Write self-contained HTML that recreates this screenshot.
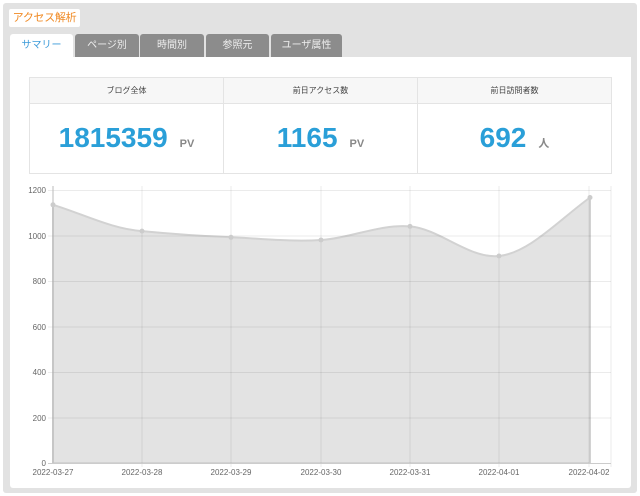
<!DOCTYPE html>
<html><head><meta charset="utf-8"><style>
body{margin:0;width:640px;height:496px;background:#fff;font-family:"Liberation Sans","Noto Sans CJK JP",sans-serif;position:relative;overflow:hidden}
.bg{position:absolute;left:3px;top:3px;width:634px;height:490px;background:#e2e2e2;border-radius:3px}
.title{position:absolute;left:9px;top:9px;width:71px;height:18px;background:#fff;border-radius:2px;color:#f08a24;font-size:11px;line-height:18px;text-align:center;white-space:nowrap;letter-spacing:-0.3px}
.tab{position:absolute;top:34px;height:23px;background:#8c8c8c;color:#eee;font-size:10px;line-height:24px;text-align:center;border-radius:3px 3px 0 0;white-space:nowrap}
.panel{position:absolute;left:10px;top:57px;width:621px;height:431px;background:#fff;border-radius:0 0 3px 3px}
.box{position:absolute;top:77px;width:193px;height:95px;border:1px solid #e4e4e4;background:#fff}
.box .h{height:25px;background:#f7f7f7;border-bottom:1px solid #e4e4e4;font-size:8px;color:#444;text-align:center;line-height:25px}
.box .v{text-align:center;margin-top:18px;color:#2a9fd8;font-size:28px;font-weight:bold}
.box .v span{font-size:11px;color:#888;margin-left:12px}
</style></head><body>
<div class="bg"></div>
<div class="title">アクセス解析</div>
<div class="tab" style="left:10px;width:63px;background:#fff;color:#3a9ad9">サマリー</div>
<div class="tab" style="left:75px;width:64px">ページ別</div>
<div class="tab" style="left:140px;width:64px">時間別</div>
<div class="tab" style="left:206px;width:63px">参照元</div>
<div class="tab" style="left:271px;width:71px">ユーザ属性</div>
<div class="panel"></div>
<div class="box" style="left:29px"><div class="h">ブログ全体</div><div class="v">1815359<span>PV</span></div></div>
<div class="box" style="left:223px"><div class="h">前日アクセス数</div><div class="v">1165<span>PV</span></div></div>
<div class="box" style="left:417px"><div class="h">前日訪問者数</div><div class="v">692<span>人</span></div></div>
<svg style="position:absolute;left:0;top:0" width="640" height="496" font-family="Liberation Sans, sans-serif" font-size="8" fill="#666">
<path d="M53,204.8 C83,214 112,229 142,231.1 C172,234 201,236 231,237.3 C261,238.5 291,242 321,240 C351,238 380,224 410,226.4 C440,229 469,259 499,256 C529,253 559,220 590,197.5 L590,463 L53,463Z" fill="#e3e3e3" stroke="#d2d2d2" stroke-width="2"/>
<g stroke="rgba(0,0,0,0.08)" stroke-width="1">
<line x1="48" y1="190.5" x2="611" y2="190.5"/><line x1="48" y1="236" x2="611" y2="236"/><line x1="48" y1="281.5" x2="611" y2="281.5"/><line x1="48" y1="327" x2="611" y2="327"/><line x1="48" y1="372.5" x2="611" y2="372.5"/><line x1="48" y1="418" x2="611" y2="418"/>
<line x1="142" y1="186" x2="142" y2="467"/><line x1="231" y1="186" x2="231" y2="467"/><line x1="321" y1="186" x2="321" y2="467"/><line x1="410" y1="186" x2="410" y2="467"/><line x1="499" y1="186" x2="499" y2="467"/><line x1="589" y1="186" x2="589" y2="467"/><line x1="611" y1="186" x2="611" y2="467"/>
</g>
<line x1="53" y1="186" x2="53" y2="464" stroke="#bbb"/>
<line x1="48" y1="463.5" x2="611" y2="463.5" stroke="#ccc"/>
<g fill="#ccc"><circle cx="53" cy="204.8" r="2.5"/><circle cx="142" cy="231.1" r="2.5"/><circle cx="231" cy="237.3" r="2.5"/><circle cx="321" cy="240" r="2.5"/><circle cx="410" cy="226.4" r="2.5"/><circle cx="499" cy="256" r="2.5"/><circle cx="590" cy="197.5" r="2.5"/></g>
<g text-anchor="end"><text x="46" y="193">1200</text><text x="46" y="239">1000</text><text x="46" y="284">800</text><text x="46" y="330">600</text><text x="46" y="375">400</text><text x="46" y="421">200</text><text x="46" y="466">0</text></g>
<g text-anchor="middle"><text x="53" y="475">2022-03-27</text><text x="142" y="475">2022-03-28</text><text x="231" y="475">2022-03-29</text><text x="321" y="475">2022-03-30</text><text x="410" y="475">2022-03-31</text><text x="499" y="475">2022-04-01</text><text x="589" y="475">2022-04-02</text></g>
</svg>
</body></html>
